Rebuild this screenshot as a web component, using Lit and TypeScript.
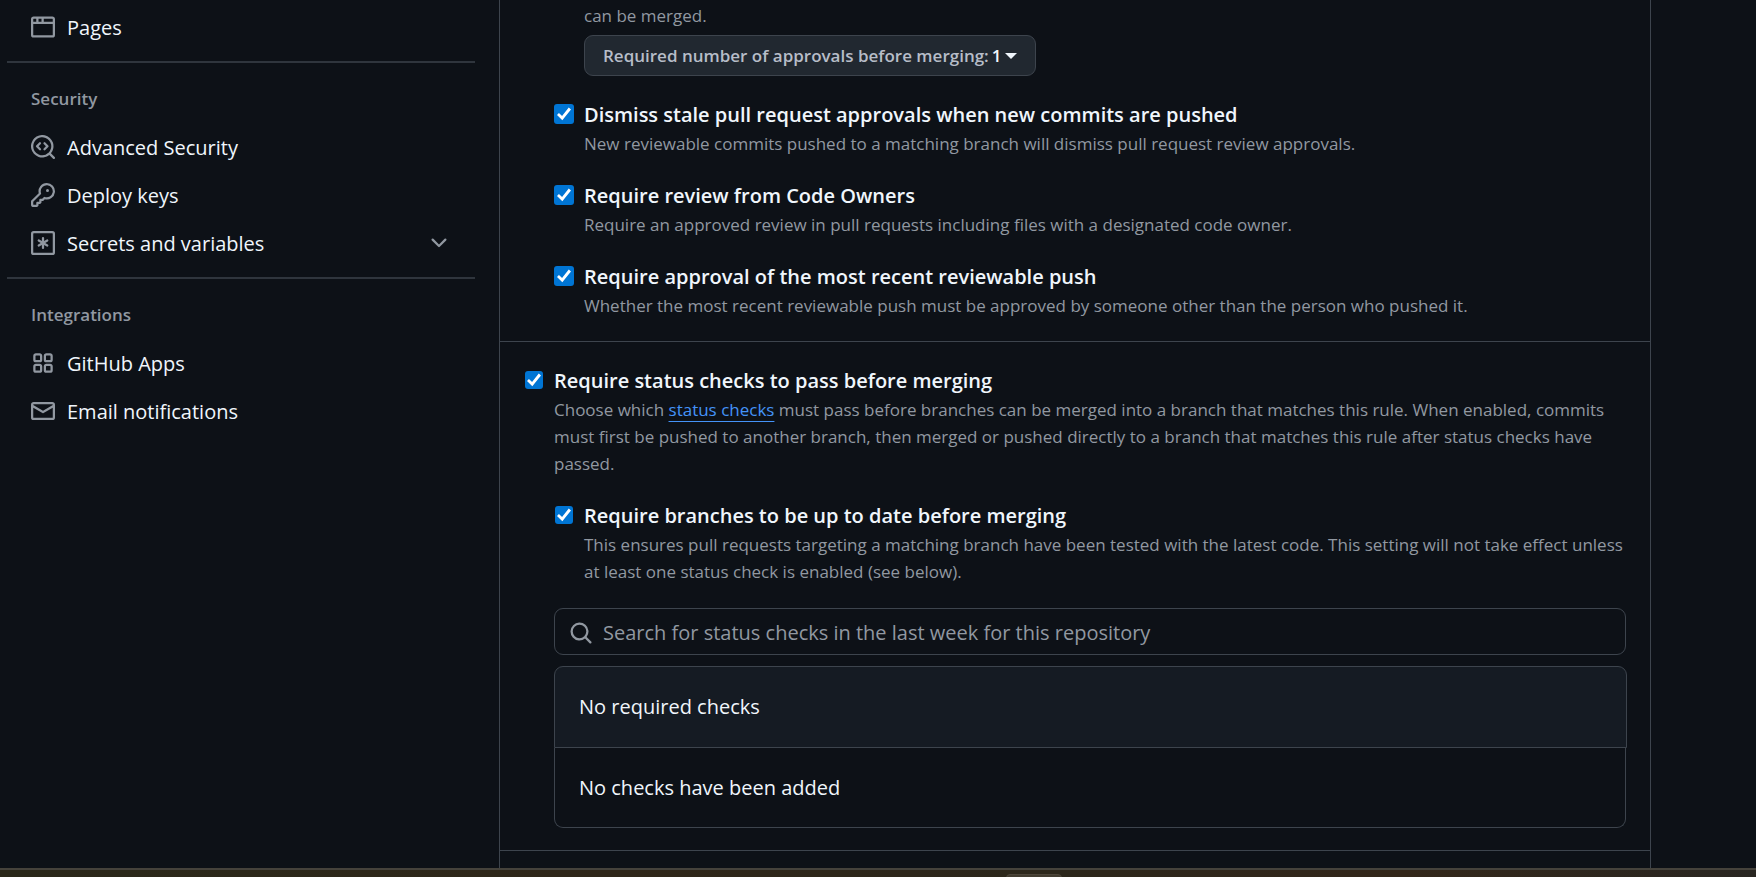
import { LitElement, html, css, svg } from "lit";
import { customElement } from "lit/decorators.js";

const icons = {
  browser: svg`<path d="M0 2.75C0 1.784.784 1 1.75 1h12.5c.966 0 1.75.784 1.75 1.75v10.5A1.75 1.75 0 0 1 14.25 15H1.75A1.75 1.75 0 0 1 0 13.25ZM14.5 6h-13v7.25c0 .138.112.25.25.25h12.5a.25.25 0 0 0 .25-.25Zm-6-3.5v2h6V2.75a.25.25 0 0 0-.25-.25ZM5 2.5v2h2v-2Zm-3.25 0a.25.25 0 0 0-.25.25V4.5h2v-2Z"/>`,
  codescan: svg`<path d="M8.47 4.97a.75.75 0 0 0 0 1.06L9.94 7.5 8.47 8.97a.75.75 0 1 0 1.06 1.06l2-2a.75.75 0 0 0 0-1.06l-2-2a.75.75 0 0 0-1.06 0ZM6.53 6.03a.75.75 0 0 0-1.06-1.06l-2 2a.75.75 0 0 0 0 1.06l2 2a.75.75 0 1 0 1.06-1.06L5.06 7.5l1.47-1.47Z"/><path d="M12.243 13.303a7.5 7.5 0 1 1 1.06-1.06l2.477 2.476a.749.749 0 0 1-.326 1.275.749.749 0 0 1-.734-.215ZM1.5 7.5a6.002 6.002 0 0 0 3.608 5.504 6.002 6.002 0 0 0 6.486-1.117.748.748 0 0 1 .292-.293A6 6 0 1 0 1.5 7.5Z"/>`,
  key: svg`<path d="M10.5 0a5.499 5.499 0 1 1-1.288 10.848l-.932.932a.749.749 0 0 1-.53.22H7v.75a.749.749 0 0 1-.22.53l-.5.5a.749.749 0 0 1-.53.22H5v.75a.749.749 0 0 1-.22.53l-.5.5a.749.749 0 0 1-.53.22h-2A1.75 1.75 0 0 1 0 14.25v-2c0-.199.079-.389.22-.53l4.932-4.932A5.5 5.5 0 0 1 10.5 0Zm-4 5.5c-.001.431.069.86.205 1.269a.75.75 0 0 1-.181.768L1.5 12.56v1.69c0 .138.112.25.25.25h1.69l.06-.06v-1.19a.75.75 0 0 1 .75-.75h1.19l.06-.06v-1.19a.75.75 0 0 1 .75-.75h1.19l1.023-1.025a.75.75 0 0 1 .768-.18A4 4 0 1 0 6.5 5.5ZM11 6a1 1 0 1 1 0-2 1 1 0 0 1 0 2Z"/>`,
  asterisk: svg`<rect x=".75" y=".75" width="14.5" height="14.5" rx="1" fill="none" stroke="currentColor" stroke-width="1.5"/><path d="M8 4.7v6.6M5.15 6.35l5.7 3.3M10.85 6.35l-5.7 3.3" fill="none" stroke="currentColor" stroke-width="1.5" stroke-linecap="round"/>`,
  apps: svg`<path d="M1.5 3.25c0-.966.784-1.75 1.75-1.75h2.5c.966 0 1.75.784 1.75 1.75v2.5A1.75 1.75 0 0 1 5.75 7.5h-2.5A1.75 1.75 0 0 1 1.5 5.75Zm7 0c0-.966.784-1.75 1.75-1.75h2.5c.966 0 1.75.784 1.75 1.75v2.5a1.75 1.75 0 0 1-1.75 1.75h-2.5A1.75 1.75 0 0 1 8.5 5.75Zm-7 7c0-.966.784-1.75 1.75-1.75h2.5c.966 0 1.75.784 1.75 1.75v2.5a1.75 1.75 0 0 1-1.75 1.75h-2.5a1.75 1.75 0 0 1-1.75-1.75Zm7 0c0-.966.784-1.75 1.75-1.75h2.5c.966 0 1.75.784 1.75 1.75v2.5a1.75 1.75 0 0 1-1.75 1.75h-2.5a1.75 1.75 0 0 1-1.75-1.75ZM3.25 3a.25.25 0 0 0-.25.25v2.5c0 .138.112.25.25.25h2.5A.25.25 0 0 0 6 5.75v-2.5A.25.25 0 0 0 5.75 3Zm7 0a.25.25 0 0 0-.25.25v2.5c0 .138.112.25.25.25h2.5a.25.25 0 0 0 .25-.25v-2.5a.25.25 0 0 0-.25-.25Zm-7 7a.25.25 0 0 0-.25.25v2.5c0 .138.112.25.25.25h2.5a.25.25 0 0 0 .25-.25v-2.5a.25.25 0 0 0-.25-.25Zm7 0a.25.25 0 0 0-.25.25v2.5c0 .138.112.25.25.25h2.5a.25.25 0 0 0 .25-.25v-2.5a.25.25 0 0 0-.25-.25Z"/>`,
  mail: svg`<path d="M1.75 2h12.5c.966 0 1.75.784 1.75 1.75v8.5A1.75 1.75 0 0 1 14.25 14H1.75A1.75 1.75 0 0 1 0 12.25v-8.5C0 2.784.784 2 1.75 2ZM1.5 12.251c0 .138.112.25.25.25h12.5a.25.25 0 0 0 .25-.25V5.809L8.38 9.397a.75.75 0 0 1-.76 0L1.5 5.809v6.442Zm13-8.181v-.32a.25.25 0 0 0-.25-.25H1.75a.25.25 0 0 0-.25.25v.32L8 7.88Z"/>`,
  chevron: svg`<path d="M12.78 5.22a.749.749 0 0 1 0 1.06l-4.25 4.25a.749.749 0 0 1-1.06 0L3.22 6.28a.749.749 0 1 1 1.06-1.06L8 8.939l3.72-3.719a.749.749 0 0 1 1.06 0Z"/>`,
  search: svg`<path d="M10.68 11.74a6 6 0 0 1-7.922-8.982 6 6 0 0 1 8.982 7.922l3.04 3.04a.749.749 0 0 1-.326 1.275.749.749 0 0 1-.734-.215ZM11.5 7a4.499 4.499 0 1 0-8.997 0A4.499 4.499 0 0 0 11.5 7Z"/>`,
};

type IconName = keyof typeof icons;

const icon = (name: IconName) =>
  html`<svg class="icon" viewBox="0 0 16 16" aria-hidden="true">${icons[name]}</svg>`;

const groups: { title?: string; items: { label: string; icon: IconName; more?: boolean }[] }[] = [
  { items: [{ label: "Pages", icon: "browser" }] },
  {
    title: "Security",
    items: [
      { label: "Advanced Security", icon: "codescan" },
      { label: "Deploy keys", icon: "key" },
      { label: "Secrets and variables", icon: "asterisk", more: true },
    ],
  },
  {
    title: "Integrations",
    items: [
      { label: "GitHub Apps", icon: "apps" },
      { label: "Email notifications", icon: "mail" },
    ],
  },
];

const reviewRules = [
  {
    id: "dismiss-stale",
    title: "Dismiss stale pull request approvals when new commits are pushed",
    note: "New reviewable commits pushed to a matching branch will dismiss pull request review approvals.",
  },
  {
    id: "code-owners",
    title: "Require review from Code Owners",
    note: "Require an approved review in pull requests including files with a designated code owner.",
  },
  {
    id: "recent-push",
    title: "Require approval of the most recent reviewable push",
    note: "Whether the most recent reviewable push must be approved by someone other than the person who pushed it.",
  },
];

@customElement("app-root")
export class AppRoot extends LitElement {
  static styles = css`
    :host {
      --bg: #0d1117;
      --fg: #f0f6fc;
      --muted: #9198a1;
      --line: #3d444d;
      display: flex;
      flex-direction: column;
      min-height: 100vh;
      box-sizing: border-box;
      background: var(--bg);
      color: var(--fg);
      font: 20px/30px "Open Sans", "Noto Sans", sans-serif;
    }
    * {
      box-sizing: border-box;
    }
    p,
    h2,
    h3,
    ul {
      margin: 0;
      padding: 0;
    }
    .page {
      flex: 1;
      display: grid;
      grid-template-columns: 475px minmax(0, 1fr);
      column-gap: 24px;
      padding-right: 105px;
    }
    .sidebar {
      padding: 3px 0 0 7px;
    }
    .group + .group {
      margin-top: 10px;
      padding-top: 12px;
      border-top: 2px solid #2f353d;
    }
    .group-title {
      padding-left: 24px;
      font-size: 17px;
      font-weight: 600;
      line-height: 48px;
      color: var(--muted);
    }
    .list {
      list-style: none;
    }
    .nav-link {
      display: flex;
      align-items: center;
      gap: 12px;
      height: 48px;
      padding: 0 24px;
      color: inherit;
      text-decoration: none;
    }
    .nav-label {
      flex: 1;
      padding-top: 2px;
    }
    .icon {
      flex: none;
      width: 24px;
      height: 24px;
      fill: currentColor;
      color: var(--muted);
    }
    .rules {
      border: solid var(--line);
      border-width: 0 1px;
    }
    .section {
      padding: 0 24px 22px;
      border-bottom: 1px solid var(--line);
    }
    .section.reviews {
      padding-top: 2px;
      padding-left: 54px;
    }
    .section.status {
      padding-top: 24px;
    }
    .note {
      font-size: 17px;
      line-height: 27px;
      color: var(--muted);
    }
    .reviews > .note {
      padding-left: 30px;
    }
    .approvals {
      display: flex;
      align-items: center;
      gap: 3px;
      height: 41px;
      margin: 6px 0 23px 30px;
      padding: 0 18px;
      border: 1px solid var(--line);
      border-radius: 9px;
      background: #212830;
      color: var(--fg);
      font: 600 17px/27px "Open Sans", "Noto Sans", sans-serif;
    }
    .approvals-label {
      color: #b7bdc8;
    }
    .caret {
      border: 6px solid transparent;
      border-top-color: currentColor;
      border-bottom: 0;
    }
    .rule {
      display: grid;
      grid-template-columns: 20px minmax(0, 1fr);
      column-gap: 10px;
    }
    .rule + .rule {
      margin-top: 23px;
    }
    .rule-title {
      display: block;
      width: fit-content;
      font-size: 20px;
      font-weight: 600;
      line-height: 31px;
    }
    .status .rule-title {
      line-height: 30px;
    }
    .check {
      appearance: none;
      display: grid;
      place-items: center;
      justify-self: center;
      width: 20px;
      height: 20px;
      margin: 5px 0 0;
      border-radius: 3px;
      background: #0075d4;
    }
    .status .check {
      width: 18px;
      height: 18px;
    }
    .check:checked::before {
      content: "";
      width: 14px;
      height: 14px;
      background: #fff;
      clip-path: polygon(0 57%, 14% 43%, 36% 64%, 84% 4%, 100% 17%, 38% 94%);
    }
    .section .nested {
      margin: 24px 0 0 30px;
    }
    .link {
      color: #4493f8;
      text-decoration: underline;
      text-underline-offset: 5px;
    }
    .search {
      display: flex;
      align-items: center;
      gap: 10px;
      height: 47px;
      margin: 23px 0 11px 30px;
      padding: 2px 14px 0;
      border: 1px solid var(--line);
      border-radius: 9px;
    }
    .search-input {
      flex: 1;
      min-width: 0;
      padding: 0;
      border: 0;
      outline: 0;
      background: none;
      color: inherit;
      font: inherit;
    }
    .search-input::placeholder {
      color: var(--muted);
      opacity: 1;
    }
    .checks {
      margin-left: 30px;
    }
    .checks-head,
    .checks-empty {
      border: 1px solid var(--line);
      font-size: 20px;
      font-weight: 400;
      line-height: 30px;
    }
    .checks-head {
      margin-right: -1px;
      padding: 25px 24px;
      border-radius: 9px 9px 0 0;
      background: #151b23;
    }
    .checks-empty {
      padding: 25px 24px 24px;
      border-top: 0;
      border-radius: 0 0 9px 9px;
    }
    .taskbar {
      display: flex;
      justify-content: center;
      height: 9px;
      padding: 4px 0 0 312px;
      border-top: 2px solid #45423b;
      background: linear-gradient(90deg, #2a2819, #2f2719 35%, #2c271b 60%, #33271a 80%, #292621);
      overflow: hidden;
    }
    .taskbar-item {
      width: 56px;
      height: 9px;
      border: 1px solid #4d463a;
      border-radius: 4px;
      background: #423c30;
    }
  `;

  private rule(id: string, title: string, note: unknown, extra = "") {
    return html`<div class="rule ${extra}">
      <input class="check" type="checkbox" id=${id} checked />
      <div>
        <label class="rule-title" for=${id}>${title}</label>
        <p class="note">${note}</p>
      </div>
    </div>`;
  }

  render() {
    return html`
      <div class="page">
        <nav class="sidebar" aria-label="Settings">
          ${groups.map(
            (group) => html`<div class="group">
              ${group.title ? html`<h2 class="group-title">${group.title}</h2>` : null}
              <ul class="list">
                ${group.items.map(
                  (item) => html`<li>
                    <a class="nav-link" href="#">
                      ${icon(item.icon)}<span class="nav-label">${item.label}</span>
                      ${item.more ? icon("chevron") : null}
                    </a>
                  </li>`
                )}
              </ul>
            </div>`
          )}
        </nav>
        <main class="rules">
          <section class="section reviews">
            <p class="note">can be merged.</p>
            <button class="approvals" type="button">
              <span class="approvals-label">Required number of approvals before merging:</span>
              <span>1</span>
              <span class="caret"></span>
            </button>
            ${reviewRules.map((r) => this.rule(r.id, r.title, r.note))}
          </section>
          <section class="section status">
            ${this.rule(
              "status-checks",
              "Require status checks to pass before merging",
              html`Choose which <a class="link" href="#">status checks</a> must pass before branches can be merged into a branch that matches this rule. When enabled, commits must first be pushed to another branch, then merged or pushed directly to a branch that matches this rule after status checks have passed.`
            )}
            ${this.rule(
              "up-to-date",
              "Require branches to be up to date before merging",
              "This ensures pull requests targeting a matching branch have been tested with the latest code. This setting will not take effect unless at least one status check is enabled (see below).",
              "nested"
            )}
            <div class="search">
              ${icon("search")}
              <input
                class="search-input"
                type="text"
                aria-label="Search for status checks"
                placeholder="Search for status checks in the last week for this repository"
              />
            </div>
            <div class="checks">
              <h3 class="checks-head">No required checks</h3>
              <p class="checks-empty">No checks have been added</p>
            </div>
          </section>
        </main>
      </div>
      <footer class="taskbar"><span class="taskbar-item"></span></footer>
    `;
  }
}
